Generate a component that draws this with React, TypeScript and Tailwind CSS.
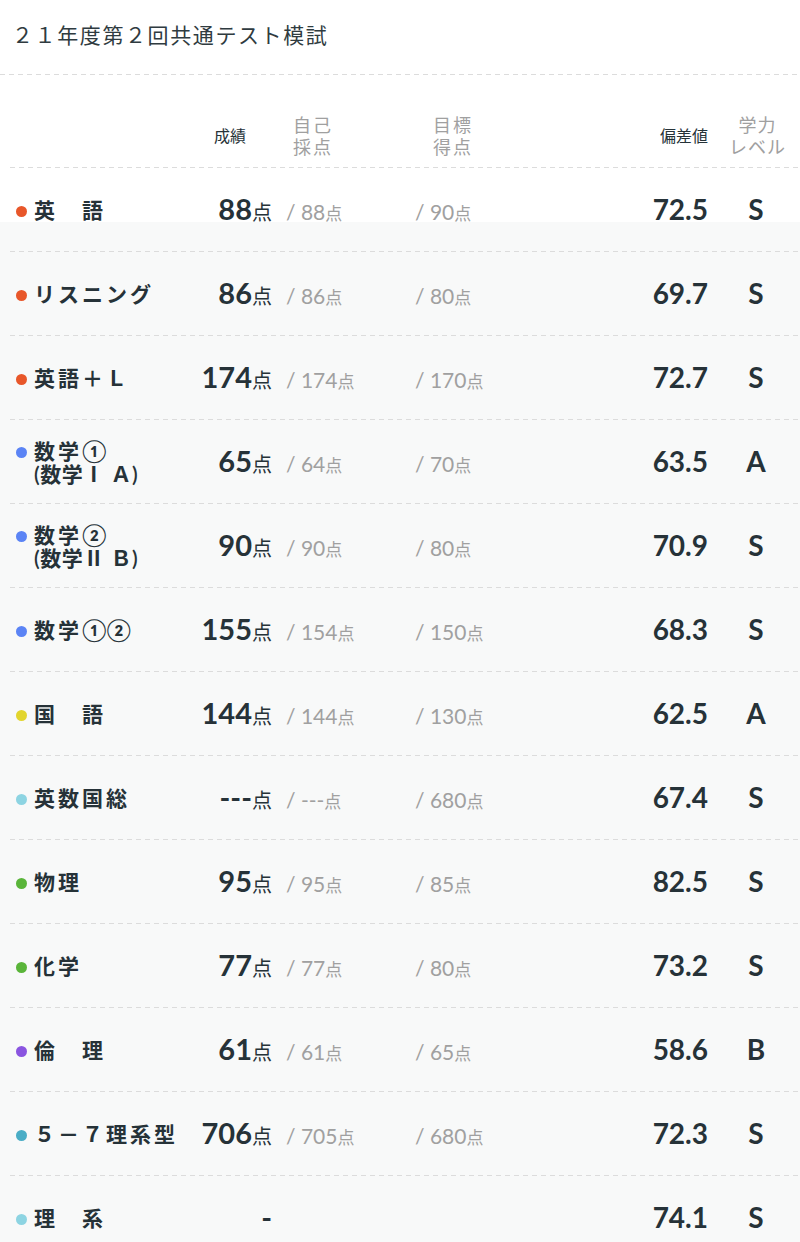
import React from "react";

type Row = {
    name: string[];
    dot: string;
    score: string;
    self?: string;
    target?: string;
    dev: string;
    level: string;
};

const rows: Row[] = [
    { name: ["英　語"], dot: "bg-[#e8572a]", score: "88", self: "88", target: "90", dev: "72.5", level: "S" },
    { name: ["リスニング"], dot: "bg-[#e8572a]", score: "86", self: "86", target: "80", dev: "69.7", level: "S" },
    { name: ["英語＋Ｌ"], dot: "bg-[#e8572a]", score: "174", self: "174", target: "170", dev: "72.7", level: "S" },
    { name: ["数学①", "(数学Ⅰ Ａ)"], dot: "bg-[#5b84f5]", score: "65", self: "64", target: "70", dev: "63.5", level: "A" },
    { name: ["数学②", "(数学Ⅱ Ｂ)"], dot: "bg-[#5b84f5]", score: "90", self: "90", target: "80", dev: "70.9", level: "S" },
    { name: ["数学①②"], dot: "bg-[#5b84f5]", score: "155", self: "154", target: "150", dev: "68.3", level: "S" },
    { name: ["国　語"], dot: "bg-[#e2d52e]", score: "144", self: "144", target: "130", dev: "62.5", level: "A" },
    { name: ["英数国総"], dot: "bg-[#8dd4e2]", score: "---", self: "---", target: "680", dev: "67.4", level: "S" },
    { name: ["物理"], dot: "bg-[#5ab53a]", score: "95", self: "95", target: "85", dev: "82.5", level: "S" },
    { name: ["化学"], dot: "bg-[#5ab53a]", score: "77", self: "77", target: "80", dev: "73.2", level: "S" },
    { name: ["倫　理"], dot: "bg-[#8a55e0]", score: "61", self: "61", target: "65", dev: "58.6", level: "B" },
    { name: ["５－７理系型"], dot: "bg-[#4aadc6]", score: "706", self: "705", target: "680", dev: "72.3", level: "S" },
    { name: ["理　系"], dot: "bg-[#8dd4e2]", score: "-", dev: "74.1", level: "S" },
];

const Dashed = ({ inset }: { inset?: boolean }) => (
    <div className={`${inset ? 'ml-[10px]' : ''} h-px bg-[repeating-linear-gradient(to_right,#dcdcdc_0_5px,transparent_5px_9px)]`} />
);

// circled digits come out tiny in Noto CJK, so blow them up a bit
const Name = ({ text, sub }: { text: string; sub?: boolean }) => (
    <div className={`${sub ? 'tracking-[0.5px]' : 'tracking-[3px]'} h-[23px]`}>
        {text.split(/([①②])/).map((part, k) =>
            part === "①" || part === "②" ? (
                <span key={k} className="inline-block align-top h-[23px] text-[22px] leading-[23px] tracking-[0px]">{part}</span>
            ) : (
                <span key={k}>{part}</span>
            )
        )}
    </div>
);

const App = () => {
    return (
        <div className="min-h-screen w-[800px] bg-[linear-gradient(#ffffff_222px,#f8f9f9_222px)] text-[#263238] font-['Lato','Noto_Sans_CJK_JP',sans-serif]">
            <h1 className="pl-[12px] pt-[21px] pb-[25px] text-[21px] leading-[28px] tracking-[1.6px] font-normal text-[#2f3b40]">
                ２１年度第２回共通テスト模試
            </h1>
            <Dashed />

            {/* header */}
            <div className="flex items-center h-[92px] pt-[30px]">
                <div className="w-[190px]" />
                <div className="w-[82px] pl-[24px] text-[16px] leading-[22px]">成績</div>
                <div className="w-[143px] pl-[21px] text-[18px] leading-[22px] tracking-[2px] text-[#a0a0a0]">
                    <div>自己</div>
                    <div>採点</div>
                </div>
                <div className="w-[185px] pl-[18px] text-[18px] leading-[22px] tracking-[2px] text-[#a0a0a0]">
                    <div>目標</div>
                    <div>得点</div>
                </div>
                <div className="w-[112px] pr-[4px] text-right text-[16px] leading-[22px]">偏差値</div>
                <div className="w-[88px] pl-[3px] text-center text-[18px] leading-[22px] tracking-[1px] text-[#a0a0a0]">
                    <div>学力</div>
                    <div>レベル</div>
                </div>
            </div>
            <Dashed inset />

            {rows.map((r, i) => (
                <div key={i}>
                    <div className="flex items-center h-[83px]">
                        <div className="w-[190px] pl-4 flex items-start">
                            <span className={`${r.dot} w-[11px] h-[11px] rounded-full mt-[8px] mr-[7px] shrink-0`} />
                            <div className="text-[21px] leading-[23px] font-semibold">
                                {r.name.map((n, j) => (
                                    <Name key={j} text={n} sub={j > 0} />
                                ))}
                            </div>
                        </div>
                        <div className="flex items-baseline -mt-[2px]">
                            <div className="w-[82px] text-right">
                                <span className="text-[29px] font-bold">{r.score}</span>
                                {r.self && <span className="text-[20px]">点</span>}
                            </div>
                            <div className="w-[143px] pl-[14px] text-[#a0a0a0]">
                                {r.self && (
                                    <>
                                        <span className="text-[21px]">/ {r.self}</span>
                                        <span className="text-[17px]">点</span>
                                    </>
                                )}
                            </div>
                            <div className="w-[185px] text-[#a0a0a0]">
                                {r.target && (
                                    <>
                                        <span className="text-[21px]">/ {r.target}</span>
                                        <span className="text-[17px]">点</span>
                                    </>
                                )}
                            </div>
                            <div className="w-[112px] pr-[4px] text-right text-[28px] font-bold">{r.dev}</div>
                            <div className="w-[88px] text-center text-[28px] font-bold">{r.level}</div>
                        </div>
                    </div>
                    <Dashed inset />
                </div>
            ))}
        </div>
    )
}

export default App
